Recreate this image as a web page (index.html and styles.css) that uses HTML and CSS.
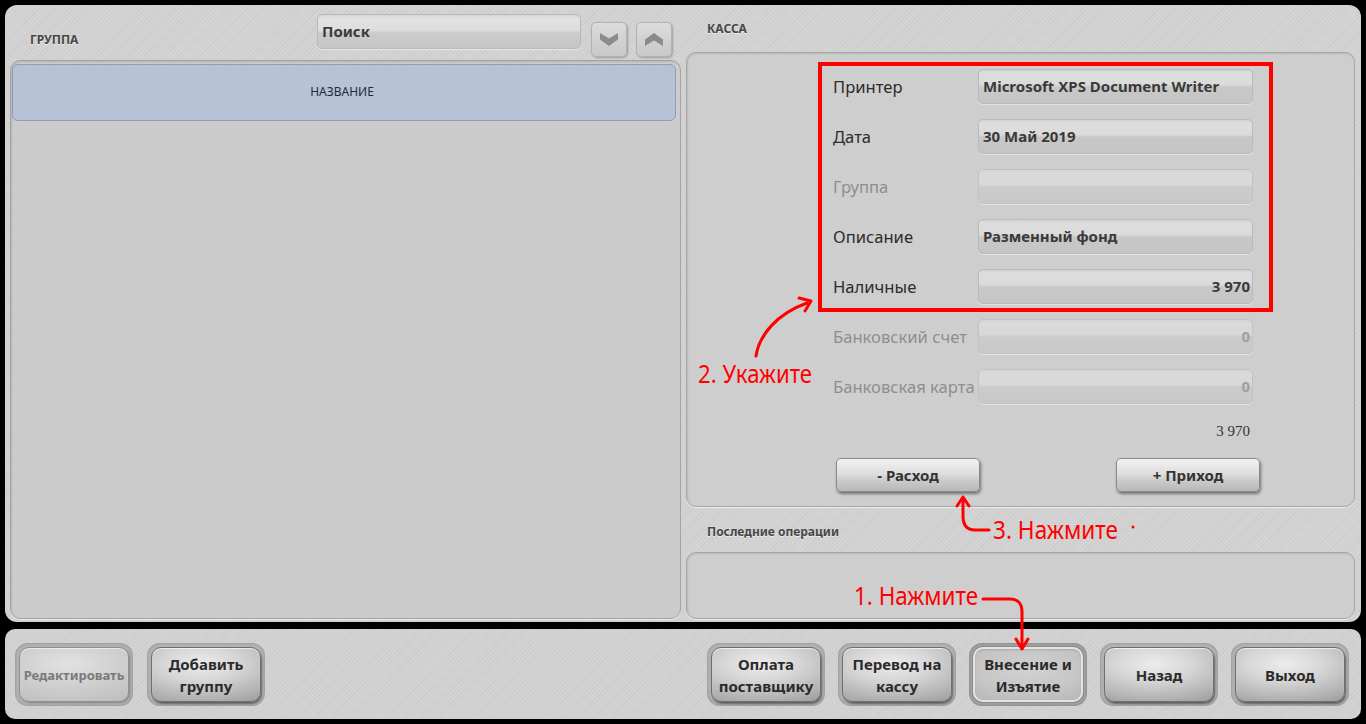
FILE: index.html
```html
<!DOCTYPE html>
<html lang="ru">
<head>
<meta charset="utf-8">
<title>Касса</title>
<link rel="stylesheet" href="styles.css">
</head>
<body>
<div class="app">
  <div class="main">
    <section class="left">
      <div class="left-head">
        <span class="caption caption-group">ГРУППА</span>
        <div class="search">Поиск</div>
        <button class="nav nav-down"><svg width="18" height="14" viewBox="0 0 18 14"><polygon points="0,0 9,5.5 18,0 18,6.5 9,13 0,6.5" fill="#8b8b8b"/></svg></button>
        <button class="nav nav-up"><svg width="18" height="14" viewBox="0 0 18 14"><polygon points="0,13 9,7.5 18,13 18,6.5 9,0 0,6.5" fill="#8b8b8b"/></svg></button>
      </div>
      <div class="list">
        <div class="list-head">НАЗВАНИЕ</div>
      </div>
    </section>
    <section class="right">
      <div class="right-head"><span class="caption">КАССА</span></div>
      <div class="kassa">
        <div class="form">
          <div class="row"><span class="label">Принтер</span><div class="field">Microsoft XPS Document Writer</div></div>
          <div class="row"><span class="label">Дата</span><div class="field">30 Май 2019</div></div>
          <div class="row disabled"><span class="label">Группа</span><div class="field"></div></div>
          <div class="row"><span class="label">Описание</span><div class="field">Разменный фонд</div></div>
          <div class="row"><span class="label">Наличные</span><div class="field num">3 970</div></div>
          <div class="row disabled"><span class="label">Банковский счет</span><div class="field num">0</div></div>
          <div class="row disabled"><span class="label">Банковская карта</span><div class="field num">0</div></div>
        </div>
        <div class="total">3 970</div>
        <div class="actions">
          <button class="act">- Расход</button>
          <button class="act">+ Приход</button>
        </div>
      </div>
      <div class="ops-head"><span class="caption">Последние операции</span></div>
      <div class="ops"></div>
    </section>
  </div>
  <div class="bar">
    <div class="group">
      <div class="btn disabled"><span class="face small">Редактировать</span></div>
      <div class="btn"><span class="face">Добавить<br>группу</span></div>
    </div>
    <div class="group">
      <div class="btn"><span class="face">Оплата<br>поставщику</span></div>
      <div class="btn"><span class="face">Перевод на<br>кассу</span></div>
      <div class="btn pressed"><span class="face">Внесение и<br>Изъятие</span></div>
      <div class="btn"><span class="face">Назад</span></div>
      <div class="btn"><span class="face">Выход</span></div>
    </div>
  </div>

  <div class="mark-box"></div>
  <svg class="notes" width="1366" height="724" viewBox="0 0 1366 724">
    <g fill="none" stroke="#ff0000" stroke-width="3" stroke-linecap="round" stroke-linejoin="round">
      <path d="M756,356 C759,336 776,314 807,303"/>
      <path d="M799,298 L811,301 L805,311"/>
      <path d="M989,530 L975,530 C967,530 963,525 963,516 L963,500"/>
      <path d="M957,506 L963,497 L969,506"/>
      <path d="M983,599 L1010,599 C1018,599 1022,604 1022,612 L1022,646"/>
      <path d="M1016,639 L1022,649 L1028,639"/>
    </g>
    <circle cx="1133" cy="527" r="1.5" fill="#ff0000"/>
    <text class="note" x="698" y="383" textLength="114" lengthAdjust="spacingAndGlyphs">2. Укажите</text>
    <text class="note" x="993" y="539" textLength="125" lengthAdjust="spacingAndGlyphs">3. Нажмите</text>
    <text class="note" x="854" y="605" textLength="124" lengthAdjust="spacingAndGlyphs">1. Нажмите</text>
  </svg>
</div>
</body>
</html>
```

FILE: styles.css
```css
* { box-sizing: border-box; }

html, body {
  margin: 0;
  padding: 0;
  background: #000;
}

body {
  font-family: "Noto Sans", "DejaVu Sans", sans-serif;
  color: #333;
}

.app {
  position: relative;
  width: 1366px;
  height: 724px;
  padding: 5px 5px 0 5px;
  overflow: hidden;
}

/* ---------- main panel ---------- */
.main {
  height: 617px;
  display: flex;
  gap: 5px;
  padding: 0 6px 3px 5px;
  border-radius: 12px;
  background-color: #d3d3d3;
  background-image:
    repeating-linear-gradient(45deg, rgba(255,255,255,0.05) 0 1px, transparent 1px 3px),
    repeating-linear-gradient(-45deg, rgba(0,0,0,0.03) 0 1px, transparent 1px 3px);
}

.caption {
  font-size: 12px;
  font-weight: 700;
  line-height: 16px;
  color: #474747;
  text-shadow: 0 1px 0 rgba(255,255,255,0.6);
}

/* left column */
.left {
  width: 671px;
  display: flex;
  flex-direction: column;
}

.left-head {
  height: 55px;
  display: flex;
  align-items: flex-start;
}

.caption-group {
  margin-top: 27px;
  padding-left: 20px;
  flex: 1;
}

.search {
  width: 264px;
  height: 35px;
  margin-top: 9px;
  margin-right: 10px;
  padding-left: 4px;
  border: 1px solid #b9b9b9;
  border-radius: 5px;
  background: linear-gradient(to bottom, #d6d6d6 0, #e2e2e2 12%, #dedede 46%, #cbcbcb 54%, #c6c6c6 100%);
  box-shadow: 0 1px 0 rgba(255,255,255,0.5);
  font-size: 15px;
  font-weight: 700;
  line-height: 32px;
  color: #3c3c3c;
}

.nav {
  width: 36px;
  height: 35px;
  margin-top: 17px;
  margin-right: 9px;
  padding: 0;
  border: 1px solid #b2b2b2;
  border-radius: 5px;
  background: linear-gradient(to bottom, #dcdcdc, #c8c8c8);
  box-shadow: 1px 1px 2px rgba(0,0,0,0.25);
  display: flex;
  align-items: center;
  justify-content: center;
}

.list {
  flex: 1;
  padding: 3px 4px 3px 1px;
  border: 1px solid #a3a3a3;
  border-radius: 10px;
  background: #cccccc;
  box-shadow: inset 1px 1px 2px rgba(0,0,0,0.12), 0 1px 0 rgba(255,255,255,0.6);
}

.list-head {
  height: 57px;
  border: 1px solid #8e9eb5;
  border-radius: 6px;
  background-color: #b5c1d4;
  background-image: repeating-linear-gradient(45deg, rgba(255,255,255,0.06) 0 1px, transparent 1px 3px);
  font-size: 12px;
  line-height: 53px;
  text-align: center;
  color: #1d2b3b;
  padding-right: 4px;
}

/* right column */
.right {
  width: 669px;
  display: flex;
  flex-direction: column;
}

.right-head {
  height: 47px;
  padding: 11px 0 0 21px;
}

.kassa {
  height: 455px;
  padding: 16px 0 0 146px;
  border: 1px solid #a6a6a6;
  border-radius: 10px;
  background: #cecece;
  box-shadow: inset 1px 1px 2px rgba(0,0,0,0.1), 0 1px 0 rgba(255,255,255,0.6);
}

.form {
  display: flex;
  flex-direction: column;
  gap: 15px;
}

.row {
  display: grid;
  grid-template-columns: 145px 275px;
  height: 35px;
  align-items: center;
}

.label {
  font-size: 16.6px;
  color: #2c2c2c;
  white-space: nowrap;
}

.field {
  height: 35px;
  padding: 0 2px 0 4px;
  border: 1px solid #bababa;
  border-radius: 5px;
  background: linear-gradient(to bottom, #d2d2d2 0, #dedede 10%, #dbdbdb 44%, #c8c8c8 52%, #c5c5c5 100%);
  box-shadow: 0 1px 0 rgba(255,255,255,0.45);
  font-size: 15px;
  font-weight: 700;
  line-height: 32px;
  color: #3a3a3a;
  white-space: nowrap;
  overflow: hidden;
}

.field.num { text-align: right; }

.row.disabled .label { color: #8e8e8e; }
.row.disabled .field {
  color: #a0a0a0;
  border-color: #c2c2c2;
  background: linear-gradient(to bottom, #d4d4d4 0, #dadada 10%, #d8d8d8 44%, #cbcbcb 52%, #c9c9c9 100%);
}

.total {
  width: 417px;
  margin-top: 18px;
  font-family: "Liberation Serif", serif;
  font-size: 15px;
  line-height: 18px;
  text-align: right;
  color: #333;
}

.actions {
  width: 427px;
  margin-top: 18px;
  padding-left: 3px;
  display: flex;
  justify-content: space-between;
}

.act {
  width: 144px;
  height: 34px;
  border: 1px solid #8a8a8a;
  border-radius: 5px;
  background: linear-gradient(to bottom, #f2f2f2 0, #dedede 45%, #c9c9c9 70%, #b8b8b8 100%);
  box-shadow: 1px 2px 3px rgba(0,0,0,0.45);
  font-family: "Noto Sans", sans-serif;
  font-size: 15px;
  font-weight: 700;
  color: #333;
}

.ops-head {
  height: 45px;
  padding: 12px 0 0 21px;
}

.ops {
  height: 67px;
  border: 1px solid #a6a6a6;
  border-radius: 10px;
  background: #cecece;
  box-shadow: inset 1px 1px 2px rgba(0,0,0,0.1), 0 1px 0 rgba(255,255,255,0.6);
}

/* ---------- bottom bar ---------- */
.bar {
  height: 90px;
  margin-top: 7px;
  padding: 14px 12px 0 10px;
  border-radius: 10px;
  background-color: #d2d2d2;
  background-image:
    repeating-linear-gradient(45deg, rgba(255,255,255,0.05) 0 1px, transparent 1px 3px),
    repeating-linear-gradient(-45deg, rgba(0,0,0,0.03) 0 1px, transparent 1px 3px);
  display: flex;
  justify-content: space-between;
  align-items: flex-start;
}

.group {
  display: flex;
  gap: 13px;
}

.group:first-child { gap: 14px; }

.btn {
  width: 118px;
  height: 63px;
  padding: 4px;
  border-radius: 13px;
  background: #b3b3b3;
  box-shadow: inset 0 0 3px rgba(0,0,0,0.25);
  display: flex;
}

.face {
  flex: 1;
  display: flex;
  align-items: center;
  justify-content: center;
  text-align: center;
  border: 1px solid #6e6e6e;
  border-radius: 10px;
  background: radial-gradient(ellipse 90% 80% at 45% 30%, #ececec 0, #d6d6d6 40%, #b9b9b9 75%, #a3a3a3 100%);
  box-shadow: 1px 2px 2px rgba(0,0,0,0.45), inset 0 1px 1px rgba(255,255,255,0.7);
  font-size: 15px;
  font-weight: 700;
  line-height: 22px;
  color: #2b2b2b;
}

.face.small {
  font-size: 13px;
}

.btn.disabled .face {
  color: #7a7a7a;
  border-color: #909090;
  background: radial-gradient(ellipse 90% 80% at 45% 30%, #e2e2e2 0, #d2d2d2 45%, #bfbfbf 100%);
  box-shadow: 1px 1px 2px rgba(0,0,0,0.25), inset 0 1px 1px rgba(255,255,255,0.6);
}

.btn.pressed {
  background: #a2a2a2;
}

.btn.pressed .face {
  border: 2px solid #e4e4e4;
  background: radial-gradient(ellipse 90% 80% at 50% 40%, #d2d2d2 0, #c4c4c4 60%, #b4b4b4 100%);
  box-shadow: 0 0 0 1px #8a8a8a, inset 0 1px 2px rgba(0,0,0,0.15);
}

/* ---------- annotations overlay ---------- */
.mark-box {
  position: absolute;
  left: 818px;
  top: 62px;
  width: 455px;
  height: 250px;
  border: 4px solid #ff0000;
  pointer-events: none;
}

.notes {
  position: absolute;
  left: 0;
  top: 0;
  pointer-events: none;
}

.note {
  font-family: "Noto Sans", sans-serif;
  font-size: 26px;
  fill: #ff0000;
}
```
